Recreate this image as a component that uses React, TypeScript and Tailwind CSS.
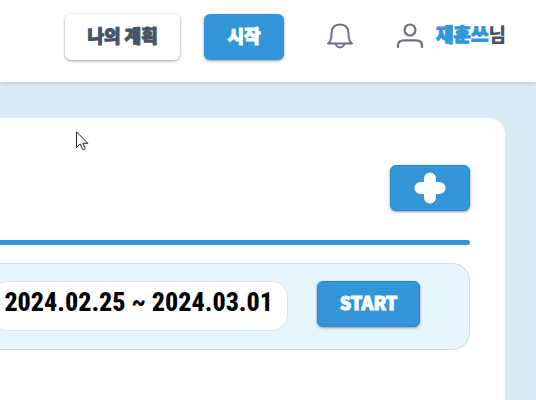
import React from "react";

const raised = "shadow-[0_1px_3px_rgba(0,0,0,0.4)]";
const korean = "font-['Noto_Sans_CJK_KR',sans-serif]";
const label = "text-lg font-black leading-6 [-webkit-text-stroke:1px_currentColor]";

function BellIcon() {
  return (
    <svg width="28" height="28" viewBox="0 0 28 28" fill="none" stroke="currentColor" strokeWidth="2" strokeLinecap="round" strokeLinejoin="round" aria-hidden="true">
      <path d="M2 21.500C4.500 20 5.500 17 5.500 11.500C5.500 5.500 9 2.500 14 2.500C19 2.500 22.500 5.500 22.500 11.500C22.500 17 23.500 20 26 21.500Z" />
      <path d="M9.500 22C10.500 24.500 12 25.500 14 25.500C16 25.500 17.500 24.500 18.500 22" />
    </svg>
  );
}

function UserIcon() {
  return (
    <svg width="28" height="28" viewBox="0 0 28 28" fill="none" stroke="currentColor" strokeWidth="2.200" strokeLinecap="round" aria-hidden="true">
      <circle cx="14" cy="8" r="5.500" />
      <path d="M2 25V23.500C2 20 4.500 18.300 8 18.300H20C23.500 18.300 26 20 26 23.500V25" />
    </svg>
  );
}

function PlusIcon() {
  return (
    <svg width="32" height="32" viewBox="0 0 32 32" fill="none" stroke="white" strokeWidth="12" strokeLinecap="round" aria-hidden="true">
      <path d="M16 6.500V25.500M6.500 16H25.500" />
    </svg>
  );
}

function Pointer() {
  return (
    <svg className="pointer-events-none absolute left-[76px] top-[131px]" width="13" height="20" viewBox="0 0 13 20" aria-hidden="true">
      <path d="M.5.8V16.500L4.200 13L6.500 18.200Q7.800 19.500 9.200 17.500L7 12.300H11.800Z" fill="white" stroke="#22222c" />
    </svg>
  );
}

export default function App() {
  return (
    <div className={`relative flex min-h-screen flex-col overflow-hidden bg-[#d9eaf4] ${korean}`}>
      <header className="relative flex h-[82px] items-start justify-end bg-white pr-[30px] pt-[14px] text-[#485363] shadow-[0_1px_4px_rgba(0,0,0,0.16)]">
        <nav className="flex items-center gap-6">
          <button className={`h-[46px] w-[115px] rounded-md bg-white pb-1 ${label} ${raised}`}>나의 계획</button>
          <button className={`h-[46px] w-20 rounded-md bg-[#3396d9] pb-1 text-white ${label} ${raised}`}>시작</button>
        </nav>
        <button aria-label="알림" className="ml-[42px] mt-2 text-[#6a7282]"><BellIcon /></button>
        <a href="#profile" className="ml-[42px] mt-2 flex items-start gap-3 text-[#6a7282]">
          <UserIcon />
          <span className="text-[19px] font-black leading-6 text-[#485363]"><span className="text-[#3396d9] [-webkit-text-stroke:1px_currentColor]">재훈쓰</span>님</span>
        </a>
      </header>

      <main className="flex flex-1 flex-col pr-[31px] pt-9">
        <section className="flex-1 rounded-tr-2xl bg-white pr-[35px] pt-[47px]">
          <div className="flex justify-end">
            <button aria-label="추가" className={`flex h-[46px] w-20 items-center justify-center rounded-md border border-[#2d86c3] bg-[#3396d9] ${raised}`}>
              <PlusIcon />
            </button>
          </div>
          <div className="mt-[29px] h-[5px] rounded-r-full bg-[#3396d9]" />
          <div className="mt-[18px] flex h-[87px] items-start justify-end rounded-r-[18px] border border-l-0 border-[#c8dce6] bg-[#e7f6fe] pr-[49px] pt-[17px]">
            <div className="flex h-[50px] w-[297px] flex-none items-center justify-end whitespace-nowrap rounded-2xl border border-[#dbe5ea] bg-white pb-2 pr-[14px] font-['Roboto_Condensed',Roboto,sans-serif] text-[26px] font-extrabold text-black">
              2024.02.25 ~ 2024.03.01
            </div>
            <button className={`ml-[29px] h-[46px] w-[103px] flex-none rounded-md border border-[#2d86c3] bg-[#3396d9] pb-1 text-white ${label} ${raised}`}>START</button>
          </div>
        </section>
      </main>
      <Pointer />
    </div>
  );
}
